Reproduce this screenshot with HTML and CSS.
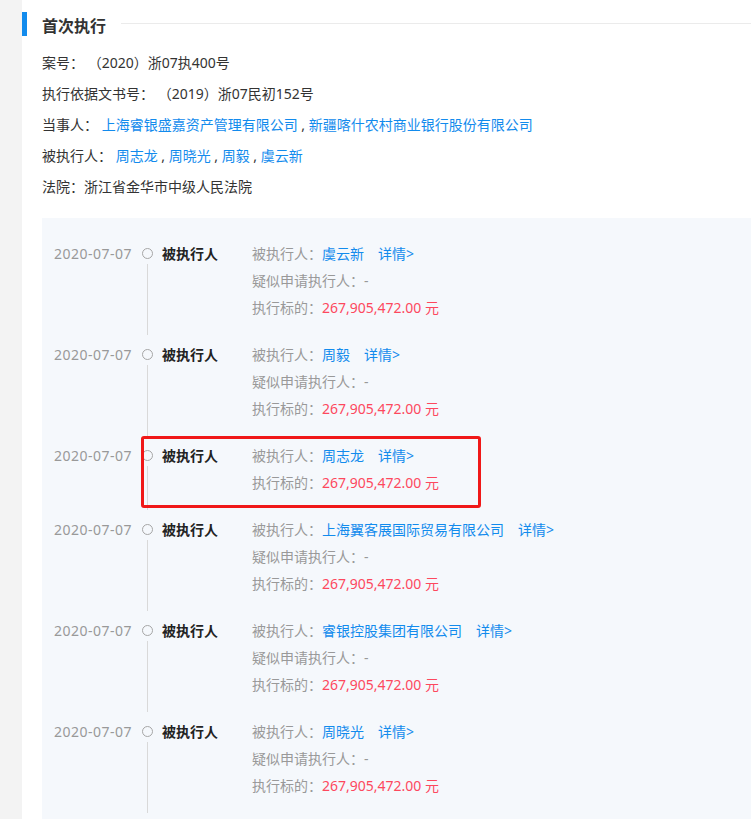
FILE: index.html
```html
<!DOCTYPE html>
<html lang="zh-CN">
<head>
<meta charset="utf-8">
<title>首次执行</title>
<link rel="stylesheet" href="styles.css">
</head>
<body>
<div class="page">
  <div class="panel">
    <div class="title-row">
      <span class="title-bar"></span>
      <h2 class="title">首次执行</h2>
      <span class="title-line"></span>
    </div>
    <div class="info">
      <div class="info-line">案号： （2020）浙07执400号</div>
      <div class="info-line">执行依据文书号： （2019）浙07民初152号</div>
      <div class="info-line">当事人： <a class="link">上海睿银盛嘉资产管理有限公司</a> , <a class="link">新疆喀什农村商业银行股份有限公司</a></div>
      <div class="info-line">被执行人： <a class="link">周志龙</a> , <a class="link">周晓光</a> , <a class="link">周毅</a> , <a class="link">虞云新</a></div>
      <div class="info-line">法院：浙江省金华市中级人民法院</div>
    </div>
    <div class="timeline">
      <div class="item">
        <div class="date">2020-07-07</div>
        <div class="axis"><span class="dot"></span><span class="rail"></span></div>
        <div class="label">被执行人</div>
        <div class="details">
          <div class="row"><span class="key">被执行人：</span><a class="link">虞云新</a><a class="link more">详情&gt;</a></div>
          <div class="row"><span class="key">疑似申请执行人：-</span></div>
          <div class="row"><span class="key">执行标的：</span><span class="money">267,905,472.00 元</span></div>
        </div>
      </div>
      <div class="item">
        <div class="date">2020-07-07</div>
        <div class="axis"><span class="dot"></span><span class="rail"></span></div>
        <div class="label">被执行人</div>
        <div class="details">
          <div class="row"><span class="key">被执行人：</span><a class="link">周毅</a><a class="link more">详情&gt;</a></div>
          <div class="row"><span class="key">疑似申请执行人：-</span></div>
          <div class="row"><span class="key">执行标的：</span><span class="money">267,905,472.00 元</span></div>
        </div>
      </div>
      <div class="item">
        <span class="highlight"></span>
        <div class="date">2020-07-07</div>
        <div class="axis"><span class="dot"></span><span class="rail"></span></div>
        <div class="label">被执行人</div>
        <div class="details">
          <div class="row"><span class="key">被执行人：</span><a class="link">周志龙</a><a class="link more">详情&gt;</a></div>
          <div class="row"><span class="key">执行标的：</span><span class="money">267,905,472.00 元</span></div>
        </div>
      </div>
      <div class="item">
        <div class="date">2020-07-07</div>
        <div class="axis"><span class="dot"></span><span class="rail"></span></div>
        <div class="label">被执行人</div>
        <div class="details">
          <div class="row"><span class="key">被执行人：</span><a class="link">上海翼客展国际贸易有限公司</a><a class="link more">详情&gt;</a></div>
          <div class="row"><span class="key">疑似申请执行人：-</span></div>
          <div class="row"><span class="key">执行标的：</span><span class="money">267,905,472.00 元</span></div>
        </div>
      </div>
      <div class="item">
        <div class="date">2020-07-07</div>
        <div class="axis"><span class="dot"></span><span class="rail"></span></div>
        <div class="label">被执行人</div>
        <div class="details">
          <div class="row"><span class="key">被执行人：</span><a class="link">睿银控股集团有限公司</a><a class="link more">详情&gt;</a></div>
          <div class="row"><span class="key">疑似申请执行人：-</span></div>
          <div class="row"><span class="key">执行标的：</span><span class="money">267,905,472.00 元</span></div>
        </div>
      </div>
      <div class="item">
        <div class="date">2020-07-07</div>
        <div class="axis"><span class="dot"></span><span class="rail"></span></div>
        <div class="label">被执行人</div>
        <div class="details">
          <div class="row"><span class="key">被执行人：</span><a class="link">周晓光</a><a class="link more">详情&gt;</a></div>
          <div class="row"><span class="key">疑似申请执行人：-</span></div>
          <div class="row"><span class="key">执行标的：</span><span class="money">267,905,472.00 元</span></div>
        </div>
      </div>
    </div>
  </div>
</div>
</body>
</html>
```

FILE: styles.css
```css
html, body {
  margin: 0;
  padding: 0;
  height: 100%;
  overflow: hidden;
}
body {
  background: #f3f3f3;
  font-family: "Noto Sans", "Noto Sans CJK SC", sans-serif;
  font-size: 14px;
  color: #333;
}
.page {
  padding-left: 22px;
  height: 100%;
}
.panel {
  background: #fff;
  height: 100%;
  overflow: hidden;
}
.title-row {
  display: flex;
  align-items: center;
  height: 24px;
  padding-top: 12px;
}
.title-bar {
  width: 5px;
  height: 24px;
  background: #128bed;
  flex: none;
}
.title {
  margin: 0 0 0 15px;
  font-size: 16px;
  font-weight: bold;
  color: #333;
  line-height: 24px;
  position: relative;
  top: 2px;
}
.title-line {
  flex: 1;
  height: 1px;
  background: #ebebeb;
  margin-left: 15px;
  align-self: flex-start;
  margin-top: 11px;
}
.info {
  padding-left: 20px;
  padding-top: 11px;
}
.info-line {
  line-height: 31px;
  color: #333;
}
.link {
  color: #128bed;
  text-decoration: none;
}
.timeline {
  margin-top: 16px;
  margin-left: 20px;
  background: #f5f8fc;
  padding: 22px 0 0 12px;
  height: 700px;
}
.item {
  position: relative;
  display: grid;
  grid-template-columns: 86px 14px 98px 1fr;
}
.date {
  line-height: 27px;
  color: #999;
  letter-spacing: 0.5px;
  white-space: nowrap;
}
.axis {
  display: flex;
  flex-direction: column;
  align-items: center;
}
.dot {
  width: 9px;
  height: 9px;
  border: 1px solid #a6a6a6;
  border-radius: 50%;
  margin-top: 8px;
  flex: none;
}
.rail {
  flex: 1;
  width: 1px;
  background: #d9d9d9;
  margin-top: 5px;
  margin-bottom: 6px;
}
.label {
  line-height: 27px;
  font-weight: bold;
  color: #222;
  padding-left: 8px;
}
.details {
  padding-bottom: 20px;
}
.row {
  line-height: 27px;
  color: #999;
  white-space: nowrap;
}
.key {
  color: #999;
}
.more {
  margin-left: 14px;
}
.money {
  color: #fd485e;
}
.highlight {
  position: absolute;
  left: 87px;
  top: -6px;
  width: 340px;
  height: 72px;
  border: 3px solid #f01818;
  border-radius: 3px;
  box-sizing: border-box;
  pointer-events: none;
}
```
